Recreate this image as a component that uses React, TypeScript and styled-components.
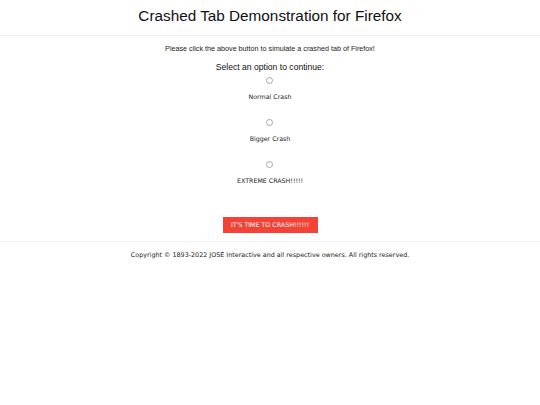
import React, { useState } from 'react';
import styled, { createGlobalStyle } from 'styled-components';

const GlobalStyle = createGlobalStyle`
  html, body {
    margin: 0;
    padding: 0;
    background: #fff;
  }
`;

const Page = styled.div`
  display: flex;
  flex-direction: column;
  align-items: stretch;
`;

const Header = styled.header`
  border-bottom: 1px solid #eeeeee;
  padding: 6px 0 9px;
  text-align: center;

  h1 {
    margin: 0;
    font-family: "Liberation Sans", Arial, sans-serif;
    font-weight: normal;
    font-size: 15.3px;
    line-height: 20px;
    color: #111;
  }
`;

const Main = styled.main`
  display: flex;
  flex-direction: column;
  align-items: center;
  padding: 8px 0 8px;
  border-bottom: 1px solid #f2f2f2;
`;

const Intro = styled.p`
  margin: 0;
  font-family: "Liberation Sans", Arial, sans-serif;
  font-size: 7.2px;
  line-height: 10px;
  color: #222;
`;

const Prompt = styled.p`
  margin: 7px 0 0;
  font-family: "Liberation Sans", Arial, sans-serif;
  font-size: 8.6px;
  line-height: 12px;
  color: #111;
`;

const Options = styled.div`
  display: flex;
  flex-direction: column;
  align-items: center;
  gap: 17px;
  margin-top: 4px;
`;

const Option = styled.label`
  display: flex;
  flex-direction: column;
  align-items: center;
  gap: 8px;
  font-family: "DejaVu Sans", Verdana, sans-serif;
  font-size: 6.3px;
  line-height: 10px;
  color: #222;
  cursor: pointer;
`;

const Radio = styled.span<{ $checked: boolean }>`
  box-sizing: border-box;
  width: 7px;
  height: 7px;
  border: 1px solid #a8a8a8;
  border-radius: 50%;
  background: ${p => (p.$checked ? '#0a6cff' : '#fff')};
`;

const CrashButton = styled.button`
  margin-top: 31px;
  background: #f44336;
  border: none;
  color: #fff;
  font-family: "DejaVu Sans", Verdana, sans-serif;
  font-size: 6.3px;
  line-height: 10px;
  padding: 0;
  width: 95px;
  height: 16px;
  white-space: nowrap;
  cursor: pointer;
`;

const Footer = styled.footer`
  padding: 8px 0;
  text-align: center;
  font-family: "DejaVu Sans", Verdana, sans-serif;
  font-size: 6.4px;
  line-height: 10px;
  color: #222;
`;

const options = ['Normal Crash', 'Bigger Crash', 'EXTREME CRASH!!!!!'];

export default function App() {
  const [selected, setSelected] = useState<number | null>(null);

  return (
    <>
      <GlobalStyle />
      <Page>
        <Header>
          <h1>Crashed Tab Demonstration for Firefox</h1>
        </Header>
        <Main>
          <Intro>Please click the above button to simulate a crashed tab of Firefox!</Intro>
          <Prompt>Select an option to continue:</Prompt>
          <Options>
            {options.map((o, i) => (
              <Option key={o} onClick={() => setSelected(i)}>
                <Radio $checked={selected === i} />
                {o}
              </Option>
            ))}
          </Options>
          <CrashButton>IT'S TIME TO CRASH!!!!!!</CrashButton>
        </Main>
        <Footer>Copyright © 1893-2022 JOSE Interactive and all respective owners. All rights reserved.</Footer>
      </Page>
    </>
  );
}
